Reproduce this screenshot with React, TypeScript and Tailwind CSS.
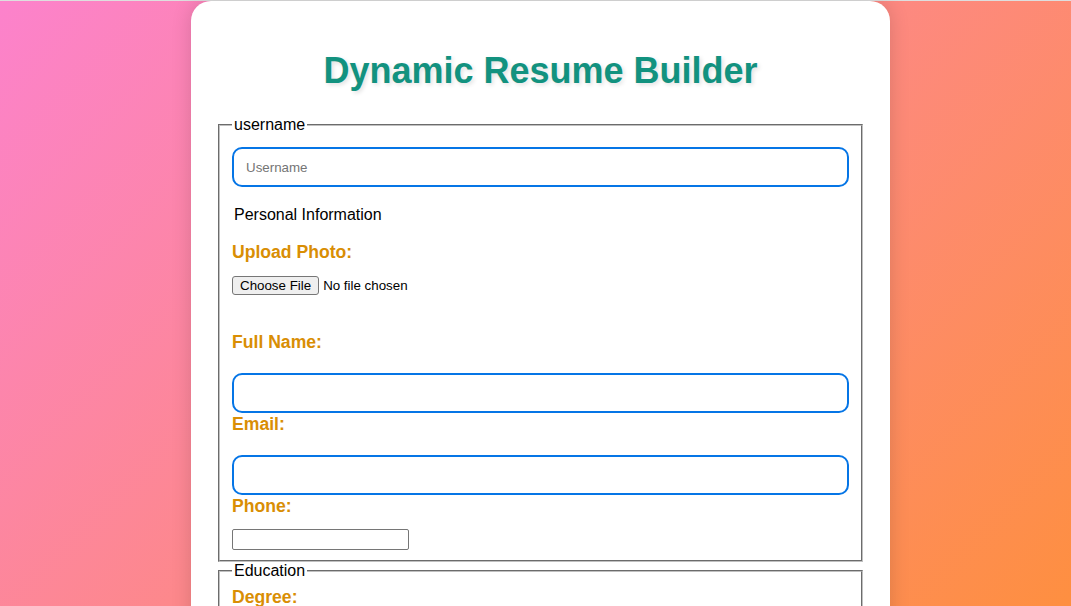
export default function App() {
  const label = "block text-[17.6px] leading-[20px] font-bold text-[#d98e04]";
  const wide = "block w-full h-[40px] rounded-[10px] border-2 border-[#0575e6] bg-white px-[12px] text-[13.33px] outline-none";

  return (
    <div className="h-screen overflow-hidden bg-[linear-gradient(135deg,#fc82cc,#fe8f40)] font-['Liberation_Sans',Arial,sans-serif] text-black">
      <div className="h-px bg-[#dedede]" />
      <div className="flex justify-center pl-[10px]">
        <div className="w-[699px] rounded-t-[20px] bg-white px-[27px] pt-[49px] pb-[40px] shadow-[0_0_20px_rgba(0,0,0,0.15)]">
          <h1 className="text-center text-[36px] leading-[41px] font-bold text-[#12927f] [text-shadow:2px_2px_4px_rgba(0,0,0,0.12)]">
            Dynamic Resume Builder
          </h1>

          <fieldset className="mt-[25px] border-2 border-[#c0c0c0] [border-style:groove] px-[12px] pb-[10px]">
            <legend className="px-[2px] text-[16px] leading-[18px]">username</legend>
            <input type="text" placeholder="Username" className={`mt-[13px] ${wide} placeholder:text-[#757575]`} />

            <p className="mt-[19px] px-[2px] text-[16px] leading-[18px]">Personal Information</p>

            <label className={`mt-[18px] ${label}`}>Upload Photo:</label>
            <input
              type="file"
              className="mt-[14px] block text-[13.33px] leading-[15px] file:mr-[4px] file:rounded-[3px] file:border file:border-[#767676] file:bg-[#efefef] file:px-[7px] file:py-[1px] file:text-[13.33px] file:text-black"
            />

            <label className={`mt-[37px] ${label}`}>Full Name:</label>
            <input type="text" className={`mt-[21px] ${wide}`} />

            <label className={`mt-[1px] ${label}`}>Email:</label>
            <input type="email" className={`mt-[21px] ${wide}`} />

            <label className={`mt-[1px] ${label}`}>Phone:</label>
            <input
              type="tel"
              className="mt-[13px] block h-[21px] w-[177px] rounded-[2px] border border-[#767676] bg-white px-[2px] text-[13.33px] outline-none"
            />
          </fieldset>

          <fieldset className="border-2 border-[#c0c0c0] [border-style:groove] px-[12px] pb-[9px]">
            <legend className="px-[2px] text-[16px] leading-[18px]">Education</legend>
            <label className={`mt-[7px] ${label}`}>Degree:</label>
            <input type="text" className={`mt-[21px] ${wide}`} />
            <label className={`mt-[1px] ${label}`}>Institution:</label>
            <input type="text" className={`mt-[21px] ${wide}`} />
          </fieldset>
        </div>
      </div>
    </div>
  );
}
